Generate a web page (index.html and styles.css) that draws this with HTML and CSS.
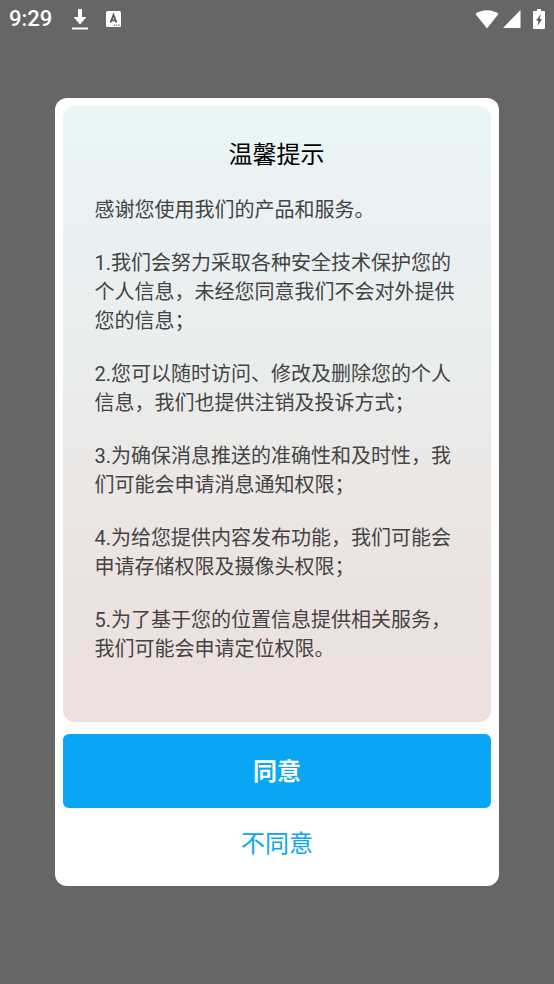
FILE: index.html
```html
<!doctype html>
<html lang="zh-CN">
<head>
    <meta charset="UTF-8">
    <meta name="viewport" content="width=device-width, initial-scale=1.0">
    <title>温馨提示</title>
    <link rel="stylesheet" href="styles.css">
</head>
<body>
    <header class="status">
        <div class="status-left">
            <span class="time">9:29</span>
            <svg class="download" width="16" height="21" viewBox="0 0 16 21">
                <path d="M6 0h4v8h4.500L8 15.500 1.500 8H6z" fill="#fff"/>
                <path d="M0 18.500h16v2H0z" fill="#fff"/>
            </svg>
            <svg class="app" width="15" height="16" viewBox="0 0 15 16">
                <rect width="15" height="16" rx="1.500" fill="#fff"/>
                <path d="M4.500 11.500l3-7.500 3 7.500M5.500 9.300h4" fill="none" stroke="#555" stroke-width="1.800"/>
                <path d="M8 13.500h1.200v1.200H8zM10.200 13.500h1.200v1.200h-1.200zM12.400 13.500h1.200v1.200h-1.200z" fill="#555"/>
            </svg>
        </div>
        <div class="status-right">
            <svg width="24" height="19" viewBox="0 0 24 19">
                <path d="M0.500 4C7-1 17-1 23.500 4L12 18.500z" fill="#fff"/>
            </svg>
            <svg width="18" height="18" viewBox="0 0 18 18">
                <path d="M17.500 0v18H0z" fill="#fff"/>
            </svg>
            <svg class="battery" width="12" height="20" viewBox="0 0 12 20">
                <path d="M4 0h4v2h3q1 0 1 1v16q0 1-1 1H1q-1 0-1-1V3q0-1 1-1h3z" fill="#fff"/>
                <path d="M8 5L3 11.500h2.500L4.500 17 9 10H6.500z" fill="#555"/>
            </svg>
        </div>
    </header>

    <main class="dialog">
        <section class="content">
            <h1>温馨提示</h1>
            <p>感谢您使用我们的产品和服务。</p>
            <p>1.我们会努力采取各种安全技术保护您的个人信息，未经您同意我们不会对外提供您的信息；</p>
            <p>2.您可以随时访问、修改及删除您的个人信息，我们也提供注销及投诉方式；</p>
            <p>3.为确保消息推送的准确性和及时性，我们可能会申请消息通知权限；</p>
            <p>4.为给您提供内容发布功能，我们可能会申请存储权限及摄像头权限；</p>
            <p>5.为了基于您的位置信息提供相关服务，我们可能会申请定位权限。</p>
        </section>
        <button class="agree" type="button">同意</button>
        <button class="refuse" type="button">不同意</button>
    </main>
</body>
</html>
```
FILE: styles.css
```css
*{
    box-sizing: border-box;
}

body{
    margin: 0;
    min-height: 100vh;
    background-color: #666;
    font-family: Roboto, "Noto Sans CJK SC", sans-serif;
}

.status{
    display: flex;
    justify-content: space-between;
    align-items: center;
    height: 38px;
    padding: 0 9px;
    color: white;
}

.status-left, .status-right{
    display: flex;
    align-items: center;
}

.time{
    font-size: 22px;
    font-weight: 500;
    line-height: 38px;
}

.download{
    margin-left: 20px;
}

.app{
    margin-left: 18px;
}

.status-right{
    gap: 4px;
}

.battery{
    margin-left: 8px;
}

.dialog{
    width: 80%;
    margin: 60px auto 0;
    padding: 8px;
    background-color: white;
    border-radius: 12px;
}

.content{
    padding: 31px 32px 58px 31px;
    border-radius: 12px;
    background-image: linear-gradient(#e8f6f6, #eaf2f4 12%, #e9eeed 40%, #ebe7e5 62%, #ece2df 80%, #ebe0dd);
}

h1{
    margin: 0 0 23px;
    font-size: 24px;
    font-weight: normal;
    line-height: 36px;
    text-align: center;
    color: black;
}

p{
    margin: 0 0 24px;
    font-size: 20px;
    line-height: 29px;
    color: #444;
}

p:last-child{
    margin-bottom: 0;
}

button{
    display: block;
    width: 100%;
    padding: 0 0 4px;
    border: none;
    font-family: inherit;
    font-size: 24px;
    cursor: pointer;
}

.agree{
    height: 74px;
    margin-top: 12px;
    border-radius: 6px;
    background-color: #08a6f3;
    color: white;
    font-weight: bold;
}

.refuse{
    height: 70px;
    background-color: transparent;
    color: #08a6f3;
}
```
